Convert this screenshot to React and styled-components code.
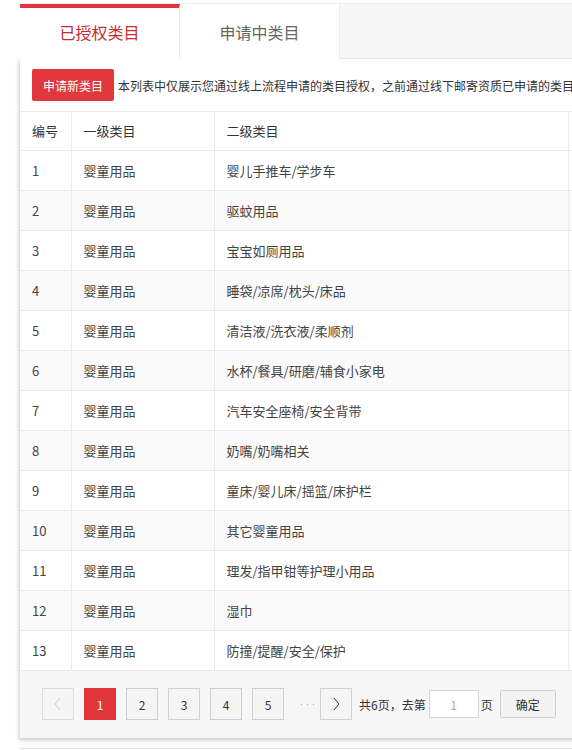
import React from "react";
import styled, { createGlobalStyle } from "styled-components";

const GlobalStyle = createGlobalStyle`
  html, body {
    margin: 0;
    padding: 0;
    background: #fff;
    overflow: hidden;
    font-family: "Microsoft YaHei", "Noto Sans CJK SC", "Noto Sans", sans-serif;
  }
`;

const Page = styled.div`
  width: 760px;
  padding: 3px 0 0 20px;
`;

const TabBar = styled.div`
  display: flex;
  height: 54px;
  background: #f7f7f7;
  border-top: 1px solid #ececec;
  border-bottom: 1px solid #ececec;
`;

const Tab = styled.div`
  width: 160px;
  box-sizing: border-box;
  display: flex;
  align-items: center;
  justify-content: center;
  margin-bottom: -1px;
  background: #fff;
  font-size: 16px;
  color: ${(p) => (p.active ? "#c72b30" : "#666")};
  border-top: ${(p) => (p.active ? "4px solid #e0363b" : "0")};
  padding-bottom: ${(p) => (p.active ? "4px" : "0")};
  border-right: 1px solid #ececec;
`;

const Panel = styled.div`
  background: #fff;
  box-shadow: -1px 2px 4px rgba(0, 0, 0, 0.22);
`;

const Toolbar = styled.div`
  display: flex;
  align-items: center;
  height: 53px;
  padding: 0 12px;
  border-bottom: 1px solid #ebebeb;
  box-sizing: border-box;
`;

const RedButton = styled.button`
  width: 82px;
  height: 32px;
  border: 0;
  border-radius: 2px;
  background: #e0383d;
  color: #fff;
  font-family: inherit;
  font-size: 12px;
  padding: 0;
  cursor: pointer;
`;

const Note = styled.span`
  margin-left: 4px;
  font-size: 12px;
  color: #333;
  white-space: nowrap;
`;

const Table = styled.table`
  width: 740px;
  border-collapse: collapse;
  table-layout: fixed;
  font-size: 13px;
  color: #444;
`;

const Row = styled.tr`
  height: ${(p) => (p.head ? "38px" : "40px")};
  background: ${(p) => (p.even ? "#fafafa" : "#fff")};
  border-bottom: 1px solid #ebebeb;
`;

const Cell = styled.td`
  padding: 0 12px;
  border-right: 1px solid #ebebeb;
  color: ${(p) => (p.head ? "#333" : "#444")};
  text-align: left;
  font-weight: 400;
  white-space: nowrap;
  overflow: hidden;
`;

const Pager = styled.div`
  display: flex;
  align-items: center;
  height: 67px;
  padding: 0 22px;
  background: #f7f7f7;
  font-size: 12px;
  color: #333;
`;

const PageBtn = styled.div`
  width: 32px;
  height: 32px;
  box-sizing: border-box;
  margin-right: 10px;
  display: flex;
  align-items: center;
  justify-content: center;
  font-size: 12px;
  background: ${(p) => (p.active ? "#e0363b" : "#f5f5f5")};
  color: ${(p) => (p.active ? "#fff" : p.disabled ? "#c8c8c8" : "#333")};
  border: ${(p) => (p.active ? "0" : p.disabled ? "1px solid #dcdcdc" : "1px solid #cfcfcf")};
`;

const Dots = styled.span`
  width: 26px;
  display: flex;
  justify-content: center;
  gap: 5px;
`;

const Dot = styled.i`
  width: 1px;
  height: 1px;
  background: #aaa;
`;

const Label = styled.span`
  margin-left: -3px;
  white-space: nowrap;
`;

const PageInput = styled.div`
  width: 50px;
  height: 28px;
  box-sizing: border-box;
  margin: 0 2px 0 3px;
  display: flex;
  align-items: center;
  justify-content: center;
  background: #fff;
  border: 1px solid #d5d5d5;
  color: #aaa;
`;

const OkButton = styled.div`
  width: 56px;
  height: 28px;
  box-sizing: border-box;
  margin-left: 7px;
  display: flex;
  align-items: center;
  justify-content: center;
  background: #f2f2f2;
  border: 1px solid #cfcfcf;
  border-radius: 2px;
  color: #333;
`;

const Footer = styled.div`
  margin-top: 10px;
  border-top: 1px solid #e4e4e4;
`;

const Chevron = ({ dir }) => (
  <svg width="10" height="14" viewBox="0 0 10 14">
    <polyline
      points={dir === "left" ? "7,1 2,7 7,13" : "3,1 8,7 3,13"}
      fill="none"
      stroke="currentColor"
      strokeWidth="1"
    />
  </svg>
);

const rows = [
  "婴儿手推车/学步车",
  "驱蚊用品",
  "宝宝如厕用品",
  "睡袋/凉席/枕头/床品",
  "清洁液/洗衣液/柔顺剂",
  "水杯/餐具/研磨/辅食小家电",
  "汽车安全座椅/安全背带",
  "奶嘴/奶嘴相关",
  "童床/婴儿床/摇篮/床护栏",
  "其它婴童用品",
  "理发/指甲钳等护理小用品",
  "湿巾",
  "防撞/提醒/安全/保护",
];

const App = () => {
  return (
    <>
      <GlobalStyle />
      <Page>
        <TabBar>
          <Tab active>已授权类目</Tab>
          <Tab>申请中类目</Tab>
        </TabBar>
        <Panel>
          <Toolbar>
            <RedButton>申请新类目</RedButton>
            <Note>本列表中仅展示您通过线上流程申请的类目授权，之前通过线下邮寄资质已申请的类目</Note>
          </Toolbar>
          <Table>
            <colgroup>
              <col style={{ width: 51 }} />
              <col style={{ width: 143 }} />
              <col style={{ width: 354 }} />
              <col />
            </colgroup>
            <thead>
              <Row head>
                <Cell as="th" head>编号</Cell>
                <Cell as="th" head>一级类目</Cell>
                <Cell as="th" head>二级类目</Cell>
                <Cell as="th" head />
              </Row>
            </thead>
            <tbody>
              {rows.map((name, i) => (
                <Row key={name} even={i % 2 === 1}>
                  <Cell>{i + 1}</Cell>
                  <Cell>婴童用品</Cell>
                  <Cell>{name}</Cell>
                  <Cell />
                </Row>
              ))}
            </tbody>
          </Table>
          <Pager>
            <PageBtn disabled>
              <Chevron dir="left" />
            </PageBtn>
            <PageBtn active>1</PageBtn>
            <PageBtn>2</PageBtn>
            <PageBtn>3</PageBtn>
            <PageBtn>4</PageBtn>
            <PageBtn>5</PageBtn>
            <Dots>
              <Dot />
              <Dot />
              <Dot />
            </Dots>
            <PageBtn>
              <Chevron dir="right" />
            </PageBtn>
            <Label>共6页，去第</Label>
            <PageInput>1</PageInput>
            <span>页</span>
            <OkButton>确定</OkButton>
          </Pager>
        </Panel>
        <Footer />
      </Page>
    </>
  );
};

export default App;
